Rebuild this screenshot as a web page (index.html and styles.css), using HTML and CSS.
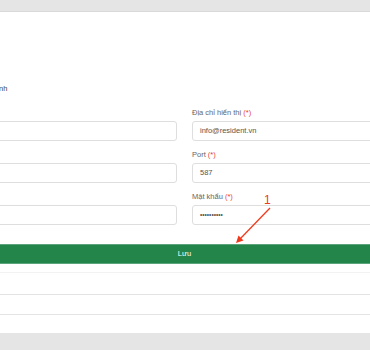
FILE: index.html
```html
<!DOCTYPE html>
<html lang="vi">
<head>
<meta charset="utf-8">
<link rel="stylesheet" href="styles.css">
</head>
<body>
<div class="card">
  <div class="inner">
    <div class="title">Cấu hình</div>
    <div class="grid">
      <div class="col">
        <div class="group"><div class="label">&nbsp;</div><div class="field"></div></div>
        <div class="group"><div class="label">&nbsp;</div><div class="field"></div></div>
        <div class="group"><div class="label">&nbsp;</div><div class="field"></div></div>
      </div>
      <div class="col">
        <div class="group"><div class="label">Địa chỉ hiển thị <span class="req">(*)</span></div><div class="field">info@resident.vn</div></div>
        <div class="group"><div class="label">Port <span class="req">(*)</span></div><div class="field">587</div></div>
        <div class="group"><div class="label">Mật khẩu <span class="req">(*)</span></div><div class="field"><span class="dots">••••••••••</span></div></div>
      </div>
    </div>
    <div class="btn">Lưu</div>
    <div class="rows">
      <div class="row r1"></div>
      <div class="row r2"></div>
      <div class="row r3"></div>
    </div>
  </div>
</div>
<svg class="annot" width="370" height="350" viewBox="0 0 370 350">
  <text x="264" y="204" class="num">1</text>
  <line x1="270" y1="208" x2="240" y2="239" stroke="#f03a1e" stroke-width="1.3"/>
  <polygon points="236,243 238.5,235.5 243.5,240.5" fill="#f03a1e"/>
</svg>
</body>
</html>
```
FILE: styles.css
```css
html, body {
  margin: 0;
  padding: 0;
}
body {
  background: #e5e5e5;
  font-family: "Liberation Sans", Arial, sans-serif;
  width: 370px;
  height: 350px;
  overflow: hidden;
  position: relative;
}
.card {
  margin-top: 12px;
  height: 321px;
  background: #fff;
  box-shadow: 0 -1px 0 #d9d9d9;
  overflow: hidden;
}
.inner {
  margin-left: -160px;
  width: 689px;
  padding-top: 72px;
}
.title {
  font-size: 7.5px;
  line-height: 10px;
  color: #444;
  margin-left: 137px;
  margin-bottom: 14px;
}
.grid {
  display: grid;
  grid-template-columns: 1fr 1fr;
  column-gap: 15px;
}
.group {
  margin-bottom: 9px;
}
.label {
  font-size: 7.5px;
  line-height: 9px;
  color: #666;
  margin-bottom: 4px;
}
.req {
  color: #e8413a;
}
.field {
  height: 20px;
  box-sizing: border-box;
  border: 1px solid #dedede;
  border-radius: 3px;
  padding-left: 7px;
  font-size: 7.5px;
  line-height: 18px;
  color: #555;
  background: #fff;
}
.dots {
  font-size: 6.5px;
  color: #555;
}
.btn {
  margin-top: 10px;
  height: 20px;
  box-sizing: border-box;
  background: #23854a;
  border-top: 1px solid #5aa57a;
  border-bottom: 1px solid #5aa57a;
  color: #fff;
  font-size: 7.5px;
  line-height: 18px;
  text-align: center;
}
.rows {
  margin-top: 8px;
}
.row {
  border-top: 1px solid #e4e4e4;
}
.r1 { height: 21px; border-top-color: #f2f2f2; }
.r2 { height: 19px; }
.r3 { height: 18px; }
.annot {
  position: absolute;
  left: 0;
  top: 0;
}
.num {
  font-family: "Liberation Sans", Arial, sans-serif;
  font-size: 12px;
  fill: #f03a1e;
}
```
